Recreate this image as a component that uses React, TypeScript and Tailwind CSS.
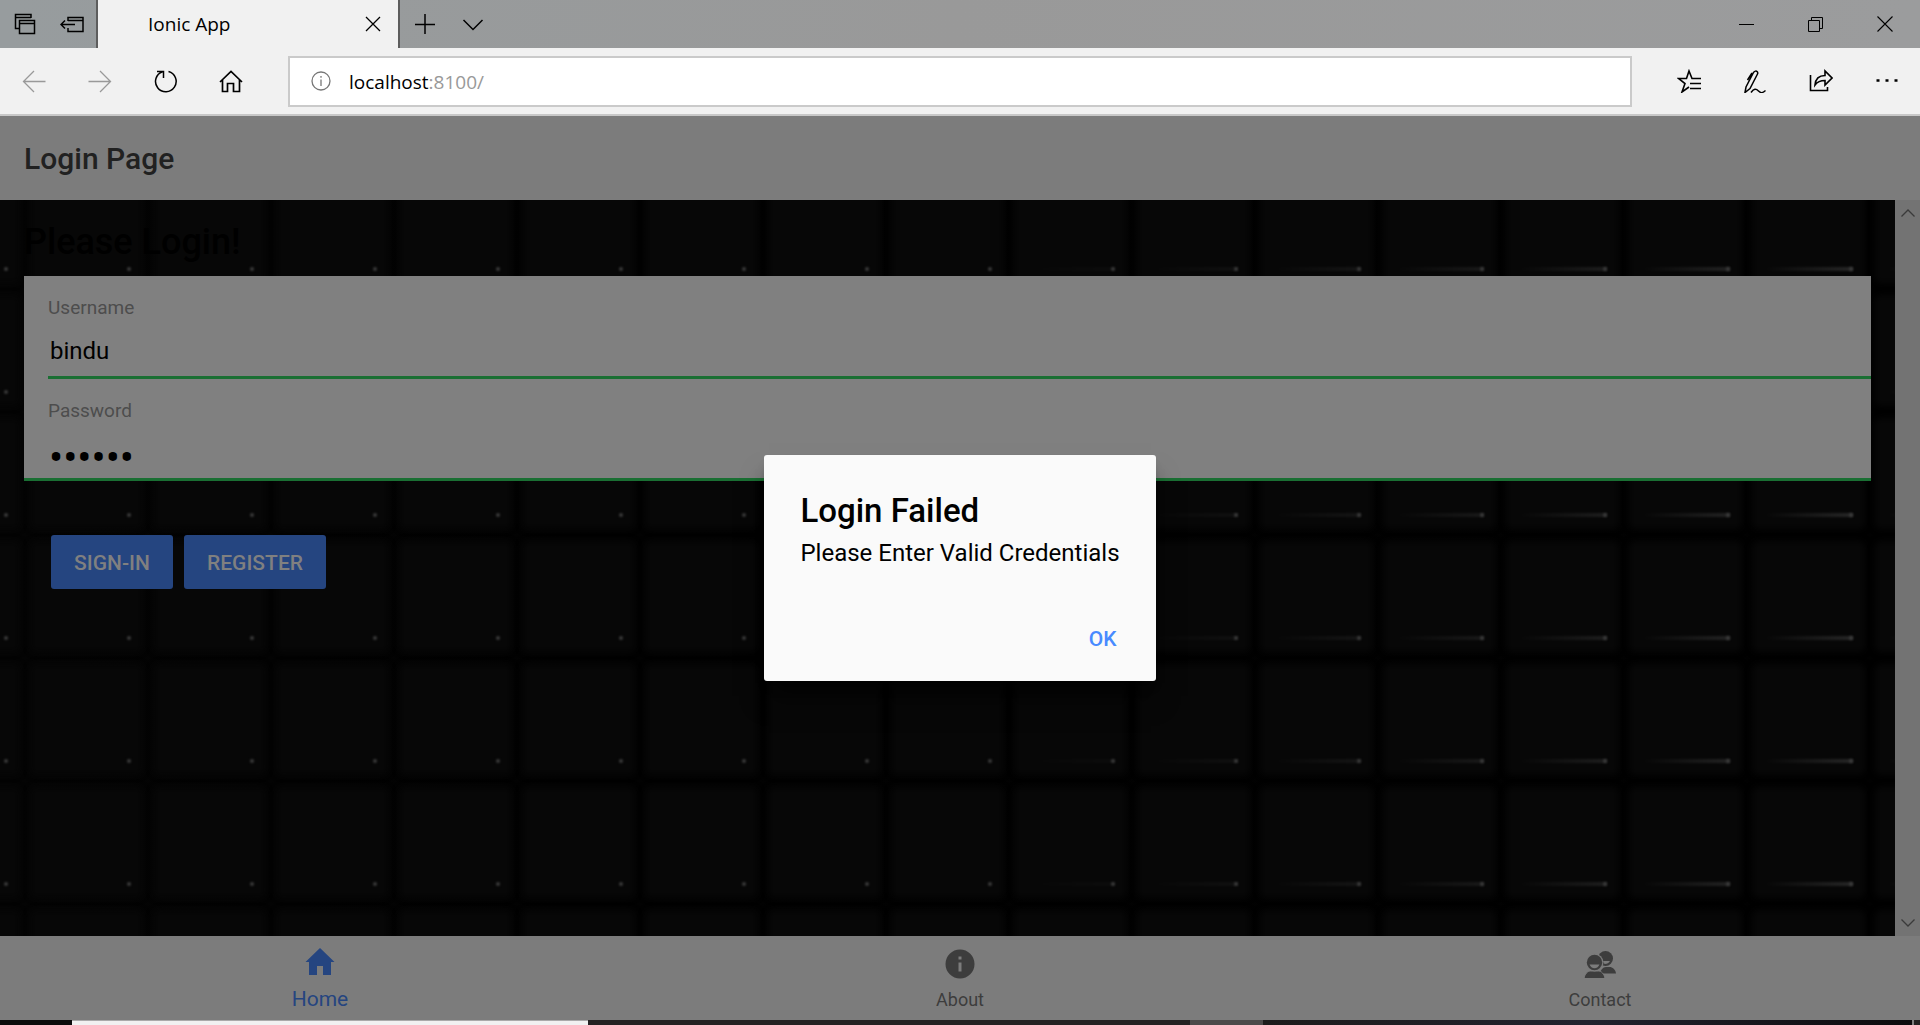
import React from "react";

const CELLS_X = Array.from({ length: 17 }, (_, i) => i);
const CELLS_Y = Array.from({ length: 8 }, (_, i) => i);

function TileBackdrop() {
  return (
    <svg className="absolute inset-0 h-full w-full" aria-hidden="true">
      <defs>
        <filter id="soft" x="-20%" y="-20%" width="140%" height="140%" colorInterpolationFilters="sRGB">
          <feGaussianBlur stdDeviation="3" />
        </filter>
        <filter id="glint" x="-50%" y="-200%" width="200%" height="500%" colorInterpolationFilters="sRGB">
          <feGaussianBlur stdDeviation="1" />
        </filter>
        <linearGradient id="grout" x1="0" x2="1" y1="0" y2="0">
          <stop offset="0" stopColor="#040404" />
          <stop offset="0.3" stopColor="#020202" />
          <stop offset="1" stopColor="#010101" />
        </linearGradient>
        <linearGradient id="streak" x1="0" x2="1" y1="0" y2="0">
          <stop offset="0" stopColor="#fff" stopOpacity="0" />
          <stop offset="1" stopColor="#fff" stopOpacity="1" />
        </linearGradient>
      </defs>
      <rect width="100%" height="100%" fill="url(#grout)" />
      {CELLS_Y.map((r) =>
        CELLS_X.map((c) => {
          const x = c * 123 - 93;
          const y = r * 123 - 28;
          const streak = c > 8 ? (c - 8) * 0.018 : 0;
          return (
            <g key={r + "-" + c}>
              <rect x={x} y={y} width="113" height="111" rx="6" fill="#070707" filter="url(#soft)" />
              <rect x={x + 12} y={y + 95} width="89" height="4" fill="url(#streak)" opacity={streak} filter="url(#glint)" />
              <circle cx={x + 99} cy={y + 97} r="2" fill="#3c3c3c" filter="url(#glint)" />
            </g>
          );
        })
      )}
    </svg>
  );
}

const line = { fill: "none", stroke: "currentColor", strokeWidth: 1.3 } as const;

function Icon({ label, children, className = "", size = 24 }: { label: string; children: React.ReactNode; className?: string; size?: number }) {
  return (
    <button type="button" aria-label={label} className={"flex h-12 items-center justify-center " + className}>
      <svg width={size} height={size} viewBox={`0 0 ${size} ${size}`} {...line}>
        {children}
      </svg>
    </button>
  );
}

function TitleBar() {
  return (
    <div className="flex h-12 bg-linear-to-r from-[#979c9e] via-[#999999] to-[#9b9c9d] pr-px text-black">
      <div className="flex w-24 items-center pl-px">
        <Icon label="Tabs you've set aside" className="w-12">
          <path d="M6 16.5H2.5V2.5H18V6M2.5 5.500H18M6.500 8.500h15v13h-15zM6.500 11.500h15" strokeWidth="1.500" />
        </Icon>
        <Icon label="Set these tabs aside" className="w-12">
          <path d="M8 9V5.500h15v14H8V16M8 8.500h15M15 12.500H1.500M5 8.500l-4 4 4 4" strokeWidth="1.500" />
        </Icon>
      </div>
      <div className="flex w-[304px] items-center border-x-2 border-[#5d5d5d] bg-[#f1f1f1]">
        <span className="flex-1 pl-[50px] font-['Open_Sans',sans-serif] text-[19px]">Ionic App</span>
        <Icon label="Close tab" className="w-[50px]">
          <path d="M5 5l14 14M19 5L5 19" />
        </Icon>
      </div>
      <Icon label="New tab" className="w-[50px]">
        <path d="M12 2v20M2 12.500h20" strokeWidth="1.500" />
      </Icon>
      <Icon label="Tab previews" className="w-[46px]">
        <path d="M2.500 8L12 17.500 21.500 8" strokeWidth="1.500" />
      </Icon>
      <div className="flex-1" />
      <Icon label="Minimize" className="w-[69px]" size={16}>
        <path d="M0 8.500h15" strokeWidth="1" />
      </Icon>
      <Icon label="Restore" className="w-[69px]" size={16}>
        <path d="M.5 4.500h11v11H.5zM3.500 4.500v-3h11v11h-3" strokeWidth="1" />
      </Icon>
      <Icon label="Close" className="w-[69px]" size={16}>
        <path d="M.5.5l15 15M15.500.5l-15 15" strokeWidth="1.100" />
      </Icon>
    </div>
  );
}

function AddressBar() {
  return (
    <div className="flex h-[68px] items-center border-b-2 border-[#c8c8c8] bg-[#f1f1f1]">
      <div className="flex w-[288px] pl-px">
        <Icon label="Back" className="w-[66px] text-[#999]">
          <path d="M23.500 12.500H1.500M12 2L1.500 12.500 12 23" />
        </Icon>
        <Icon label="Forward" className="w-[66px] text-[#999]">
          <path d="M.5 12.500h22M12 2l10.500 10.500L12 23" />
        </Icon>
        <Icon label="Refresh" className="w-[65px]">
          <path d="M14.500 2.500A10.300 10.300 0 1 1 8.500 2.700M3 2.500h6.500V9" strokeWidth="1.500" />
        </Icon>
        <Icon label="Home" className="w-[66px]">
          <path d="M1 13L12 2.500 23 13M3.500 11v11.500h5V14.500h6v8h6V11" strokeWidth="1.700" />
        </Icon>
      </div>
      <div className="flex h-[51px] flex-1 items-center border-2 border-[#cacaca] bg-white pl-5">
        <svg width="22" height="22" viewBox="0 0 22 22" {...line} className="text-[#777]">
          <circle cx="11" cy="11" r="9" />
          <path d="M11 9.500V16M11 6v1.700" />
        </svg>
        <label className="relative ml-[17px] flex-1 pt-0.5 font-['Open_Sans',sans-serif] text-[19px] leading-7">
          <span className="pointer-events-none absolute inset-0 pt-0.5" aria-hidden="true">
            localhost<span className="text-[#999]">:8100/</span>
          </span>
          <input aria-label="Address" defaultValue="localhost:8100/" className="block w-full bg-transparent text-transparent outline-none" />
        </label>
      </div>
      <div className="flex w-[288px] pl-6">
        <Icon label="Favorites" className="w-[66px]">
          <path d="M24 9.500h-9L12 2 9.500 9.500H1.500L8 14.500 5 23l7-5M13 14.500h11M13 19.500h11" strokeWidth="1.600" />
        </Icon>
        <Icon label="Add notes" className="w-[66px]">
          <path d="M2 23.500L3 18 10.500 3.500q2-2.500 4-.5.500 1 0 2L7 19.500zM4.500 11L9 4M8 23.500c3-4 5-4 7.500-1.500s4 2 7-.5" strokeWidth="1.500" />
        </Icon>
        <Icon label="Share" className="w-[66px]">
          <path d="M1.500 6v15.500h17V18M6 16c.5-6 4-9.500 10-9.500V2l7 7-7 7v-4.500c-5 0-7.500 1-10 4.500z" strokeWidth="1.600" />
        </Icon>
        <Icon label="More" className="w-[66px]">
          <path d="M1.500 11.500h3M10.500 11.500h3M19.500 11.500h3" strokeWidth="2.500" />
        </Icon>
      </div>
    </div>
  );
}

function Field({ label, id, type, value, last = false }: { label: string; id: string; type: string; value: string; last?: boolean }) {
  return (
    <div className={"flex flex-col border-b-[3px] border-[#1a6f33] pt-5 " + (last ? "h-[102px] pl-6" : "ml-6 h-[103px]")}>
      <label htmlFor={id} className="text-[19px] leading-6 text-[#4d4d4d]">{label}</label>
      <input
        id={id}
        type={type}
        defaultValue={value}
        className={"h-7 w-full bg-transparent text-black outline-none " + (last ? "mt-5 pl-px text-[42px]" : "mt-[17px] pl-0.5 text-2xl")}
      />
    </div>
  );
}

function Tab({ label, active = false, children }: { label: string; active?: boolean; children: React.ReactNode }) {
  return (
    <a href="#" className={"flex flex-1 flex-col items-center " + (active ? "pt-2.5 text-[21px] text-[#254580]" : "pt-3 text-lg text-[#3d3d3d]")}>
      <svg width="34" height="32" viewBox="0 0 34 32" fill="currentColor">{children}</svg>
      <span className={"leading-6 " + (active ? "mt-[9px]" : "mt-2")}>{label}</span>
    </a>
  );
}

export default function App() {
  return (
    <div className="flex h-screen flex-col overflow-hidden bg-black font-[Roboto,sans-serif]">
      <TitleBar />
      <AddressBar />
      <div className="relative flex min-h-0 flex-1 flex-col">
        <header className="flex h-[84px] shrink-0 items-center bg-[#7c7c7c] px-6">
          <h1 className="text-[30px] font-medium text-[#212121]">Login Page</h1>
        </header>
        <div className="flex min-h-0 flex-1">
          <main className="relative flex-1 overflow-hidden">
            <TileBackdrop />
            <div className="relative px-6 pt-[22px]">
              <h2 className="text-4xl leading-10 font-medium text-black">Please Login!</h2>
              <form className="mt-3.5">
                <div className="bg-[#808080]">
                  <Field label="Username" id="username" type="text" value="bindu" />
                  <Field label="Password" id="password" type="password" value="secret" last />
                </div>
                <div className="mt-[54px] flex gap-[11px] pl-[27px] text-[21px] font-medium text-[#808080]">
                  <button type="button" className="h-[54px] w-[122px] rounded-[3px] bg-[#254580] pt-1">SIGN-IN</button>
                  <button type="button" className="h-[54px] w-[142px] rounded-[3px] bg-[#254580] pt-1">REGISTER</button>
                </div>
              </form>
            </div>
          </main>
          <div className="flex w-[25px] flex-col items-center justify-between bg-[#737373] pt-1.5 pb-1.5 text-[#3a3a3a]">
            <svg width="16" height="14" viewBox="0 0 16 14" {...line}><path d="M1.500 10.500L8 4l6.500 6.500" /></svg>
            <svg width="16" height="14" viewBox="0 0 16 14" {...line}><path d="M1.500 3.500L8 10l6.500-6.500" /></svg>
          </div>
        </div>
        <nav className="flex h-[84px] shrink-0 bg-[#7c7c7c]">
          <Tab label="Home" active>
            <path d="M17 2L2.500 16H6v13h8V20h6v9h8V16h3.500z" />
          </Tab>
          <Tab label="About">
            <path fillRule="evenodd" d="M17 1.500a14.500 14.500 0 1 1 0 29 14.500 14.500 0 0 1 0-29zM15.500 14.500v9h3v-9zM15.500 8.500v3h3v-3z" />
          </Tab>
          <Tab label="Contact">
            <circle cx="22.500" cy="10.500" r="7.500" />
            <path d="M20 13h7q-1.500 3-5.500 3z" fill="#7c7c7c" />
            <path d="M16 25.500l3-4.500q1.500-2 4-2h3.500c3 0 6 2.500 6.500 6.500z" />
            <path d="M1 30.500c.8-4.500 3.500-7.500 6.500-7.500h8c3 0 5.700 3 6.500 7.500z" stroke="#7c7c7c" />
            <circle cx="11.500" cy="14.500" r="9" fill="#7c7c7c" />
            <circle cx="11.500" cy="14.500" r="7.700" />
            <path d="M6.500 16.500h10q-1.500 3.700-5 3.700t-5-3.700z" fill="#7c7c7c" />
          </Tab>
        </nav>
        <div className="absolute inset-0 flex items-center justify-center pb-px">
          <section role="alertdialog" aria-labelledby="alert-title" aria-describedby="alert-text" className="flex flex-col rounded-[3px] bg-[#fafafa] px-9 pt-9 pb-5 shadow-xl shadow-black/60">
            <h2 id="alert-title" className="text-[33px] leading-10 font-medium text-black">Login Failed</h2>
            <p id="alert-text" className="text-2xl leading-11 text-black">Please Enter Valid Credentials</p>
            <button type="button" className="mt-[42px] self-end px-[3px] text-[21px] leading-11 font-medium text-[#488aff]">OK</button>
          </section>
        </div>
      </div>
      <div className="flex h-[5px] shrink-0 bg-[#242222]">
        <div className="w-[72px] bg-[#0b0b0b]" />
        <div className="w-[516px] border-t border-[#aaa] bg-[#f1f1f1]" />
        <div className="ml-[602px] w-[73px] bg-[#4c4a4a]" />
        <div className="flex-1 bg-linear-to-r from-[#1c1b1b] via-[#22222e] to-[#0c0b0d]" />
        <div className="mr-1.5 w-0.5 bg-[#808080]" />
      </div>
    </div>
  );
}
